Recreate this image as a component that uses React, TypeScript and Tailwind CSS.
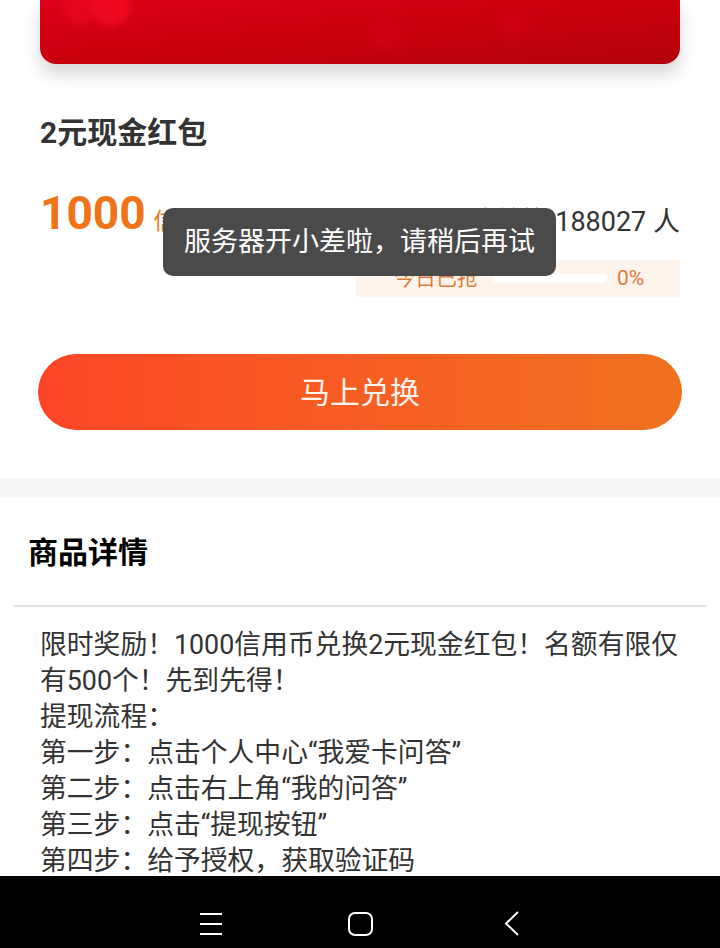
import React from "react";

const lines = [
  "限时奖励！1000信用币兑换2元现金红包！名额有限仅",
  "有500个！先到先得！",
  "提现流程：",
  "第一步：点击个人中心“我爱卡问答”",
  "第二步：点击右上角“我的问答”",
  "第三步：点击“提现按钮”",
  "第四步：给予授权，获取验证码",
  "第五步：输入验证码，完成提现",
];

export default function App() {
  return (
    <div
      className="relative w-[720px] h-[948px] overflow-hidden bg-white flex flex-col"
      style={{ fontFamily: 'Roboto, "Noto Sans CJK SC", sans-serif' }}
    >
      <div className="flex-1 min-h-0 overflow-hidden flex flex-col">
        <div className="shrink-0 px-[40px] pb-[48px] flex flex-col">
          <div className="relative h-[64px] rounded-b-[16px] overflow-hidden bg-gradient-to-br from-[#dc0019] via-[#c8000f] to-[#b3000c] shadow-[0_10px_18px_rgba(0,0,0,0.16)]">
            <div className="absolute left-[22px] top-[-14px] w-[34px] h-[38px] rounded-full bg-[#e8061f] blur-[3px] opacity-80" />
            <div className="absolute left-[50px] top-[-16px] w-[40px] h-[42px] rounded-full bg-[#f00a24] blur-[3px] opacity-90" />
            <div className="absolute left-[330px] top-[20px] w-[30px] h-[30px] rounded-full bg-[#d6001a] blur-[6px] opacity-70" />
            <div className="absolute left-[460px] top-[10px] w-[30px] h-[30px] rounded-full bg-[#d4001a] blur-[6px] opacity-60" />
          </div>
          <div className="mt-[49px] text-[30px] leading-[40px] font-bold text-[#333333]">2元现金红包</div>
          <div className="mt-[37px] flex justify-between items-start">
            <div className="flex items-baseline">
              <span className="text-[46px] leading-[46px] font-bold text-[#f07318]">1000</span>
              <span className="ml-[8px] text-[23px] text-[#f07318]">信用币</span>
            </div>
            <div className="flex flex-col items-end pt-[14px]">
              <div className="text-[27px] leading-[36px] text-[#333333]">累计兑换 188027 人</div>
              <div className="mt-[20px] h-[37px] w-[324px] bg-[#fff4ec] flex items-center pl-[38px]">
                <span className="text-[21px] text-[#e07a3a]">今日已抢</span>
                <div className="ml-[15px] w-[114px] h-[9px] rounded-full bg-white" />
                <span className="ml-[10px] text-[21px] text-[#e07a3a]">0%</span>
              </div>
            </div>
          </div>
          <div className="mt-[57px] -mx-[2px] h-[76px] rounded-full bg-gradient-to-r from-[#fd4526] to-[#f07120] flex items-center justify-center">
            <span className="text-[30px] text-[#fff4ee]">马上兑换</span>
          </div>
        </div>
        <div className="shrink-0 h-[19px] bg-[#f5f6f8]" />
        <div className="shrink-0 pt-[36px] flex flex-col">
          <div className="px-[28px] text-[30px] leading-[40px] font-bold text-black">商品详情</div>
          <div className="mt-[32px] mx-[14px] h-[2px] bg-[#e2e2e2]" />
          <div className="mt-[20px] px-[40px] text-[26.8px] leading-[36px] text-[#333333]">
            {lines.map((l) => (
              <div key={l} className="whitespace-nowrap">{l}</div>
            ))}
          </div>
        </div>
      </div>
      <div className="h-[72px] bg-black shrink-0">
        <svg width="720" height="72" viewBox="0 876 720 72">
          <g stroke="white" strokeWidth="2" fill="none">
            <line x1="200" y1="914" x2="222" y2="914" />
            <line x1="200" y1="924" x2="222" y2="924" />
            <line x1="200" y1="934" x2="222" y2="934" />
            <rect x="349" y="913" width="23" height="22" rx="6" />
            <polyline points="518,912 506,923.5 518,935" />
          </g>
        </svg>
      </div>
      <div className="absolute left-[163px] top-[208px] w-[393px] h-[68px] rounded-[10px] bg-[#4a4a4a] flex items-center justify-center">
        <span className="text-[27px] text-white">服务器开小差啦，请稍后再试</span>
      </div>
    </div>
  );
}
